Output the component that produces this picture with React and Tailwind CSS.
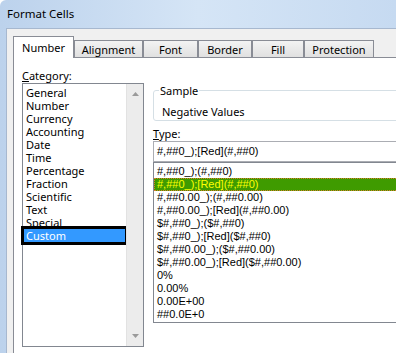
import React from "react";

const categories = [
  "General",
  "Number",
  "Currency",
  "Accounting",
  "Date",
  "Time",
  "Percentage",
  "Fraction",
  "Scientific",
  "Text",
  "Special",
];

const formats = [
  "#,##0_);(#,##0)",
  "#,##0_);[Red](#,##0)",
  "#,##0.00_);(#,##0.00)",
  "#,##0.00_);[Red](#,##0.00)",
  "$#,##0_);($#,##0)",
  "$#,##0_);[Red]($#,##0)",
  "$#,##0.00_);($#,##0.00)",
  "$#,##0.00_);[Red]($#,##0.00)",
  "0%",
  "0.00%",
  "0.00E+00",
  "##0.0E+0",
];

const tabs = [
  { name: "Alignment", w: "w-[69px]" },
  { name: "Font", w: "w-[55px]" },
  { name: "Border", w: "w-[54px]" },
  { name: "Fill", w: "w-[52px]" },
  { name: "Protection", w: "w-[70px]" },
];

const Arrow = ({ down }) => (
  <svg width="7" height="4" viewBox="0 0 7 4">
    <path d={down ? "M0 0h7L3.5 4z" : "M0 4h7L3.5 0z"} fill="#9a9a9a" />
  </svg>
);

export default function App() {
  return (
    <div className="w-[396px] h-[353px] overflow-hidden flex flex-col rounded-tl-[6px] bg-gradient-to-r from-[#bcd2ec] via-[#d5e5f6] to-[#c6daf1] text-black text-[11px] font-['Noto_Sans',sans-serif]">
      <div className="h-[28px] shrink-0 flex items-center pl-[7px] text-[11.5px]">Format Cells</div>

      <div className="flex-1 flex pl-[6px] min-h-0">
        <div className="flex-1 flex flex-col bg-[#f0f0f0] border-l border-t border-[#a7b8cf] pl-[6px] pt-[7px] min-w-0">
          {/* tabs */}
          <div className="h-[21px] shrink-0 flex items-end">
            <div className="relative z-10 w-[61px] h-[22px] -mb-[1px] bg-white border border-b-0 border-[#898c95] flex justify-center pt-[4px] leading-[13px]">
              Number
            </div>
            {tabs.map((t) => (
              <div
                key={t.name}
                className={`${t.w} h-[17px] bg-gradient-to-b from-[#f3f3f3] to-[#e0e0e0] border border-b-0 border-[#898c95] flex items-center justify-center leading-[13px]`}
              >
                {t.name}
              </div>
            ))}
          </div>

          {/* panel */}
          <div className="flex-1 w-[500px] bg-white border-l border-t border-[#898c95] pl-[8px] pt-[11px] flex gap-[9px]">
            <div className="w-[122px] flex flex-col">
              <div className="leading-[13px] h-[13px]">
                <span className="underline">C</span>ategory:
              </div>
              <div className="mt-[1px] h-[264px] border border-[#828790] flex">
                <div className="flex-1 pt-[2px] flex flex-col">
                  {categories.map((c) => (
                    <div key={c} className="leading-[13px] h-[13px] pl-[3px]">
                      {c}
                    </div>
                  ))}
                  <div className="mx-[1px] leading-[13px] h-[13px] pl-[2px] bg-[#3399ff] text-white outline-[3px] outline-solid outline-black">
                    Custom
                  </div>
                </div>
                <div className="w-[17px] bg-[#ececec] border-l border-[#e2e2e2] flex flex-col items-center justify-between pt-[8px] pb-[8px]">
                  <Arrow />
                  <Arrow down />
                </div>
              </div>
            </div>

            <div className="flex-1 flex flex-col">
              <div className="relative mt-[21px] h-[31px] border border-[#d5dfe5] rounded-[3px] pl-[8px] pt-[14px] leading-[13px]">
                <span className="absolute -top-[7px] left-[5px] bg-white px-[1px] leading-[13px]">Sample</span>
                Negative Values
              </div>
              <div className="mt-[6px] leading-[13px] h-[13px]">
                <span className="underline">T</span>ype:
              </div>
              <div className="mt-[1px] h-[21px] border border-[#abadb3] flex items-center pl-[3px] font-['Liberation_Sans',sans-serif] text-[11px]">
                #,##0_);[Red](#,##0)
              </div>
              <div className="h-[161px] border border-[#828790] pt-[2px] font-['Liberation_Sans',sans-serif] text-[11px]">
                {formats.map((f, i) => (
                  <div
                    key={f}
                    className={
                      i === 1
                        ? "h-[13px] leading-[11px] pl-[2px] bg-[#3f9b00] text-[#ffff00] border border-dotted border-[#d87a2a]"
                        : "h-[13px] leading-[13px] pl-[3px]"
                    }
                  >
                    {f}
                  </div>
                ))}
              </div>
            </div>
          </div>
        </div>
      </div>
    </div>
  );
}
